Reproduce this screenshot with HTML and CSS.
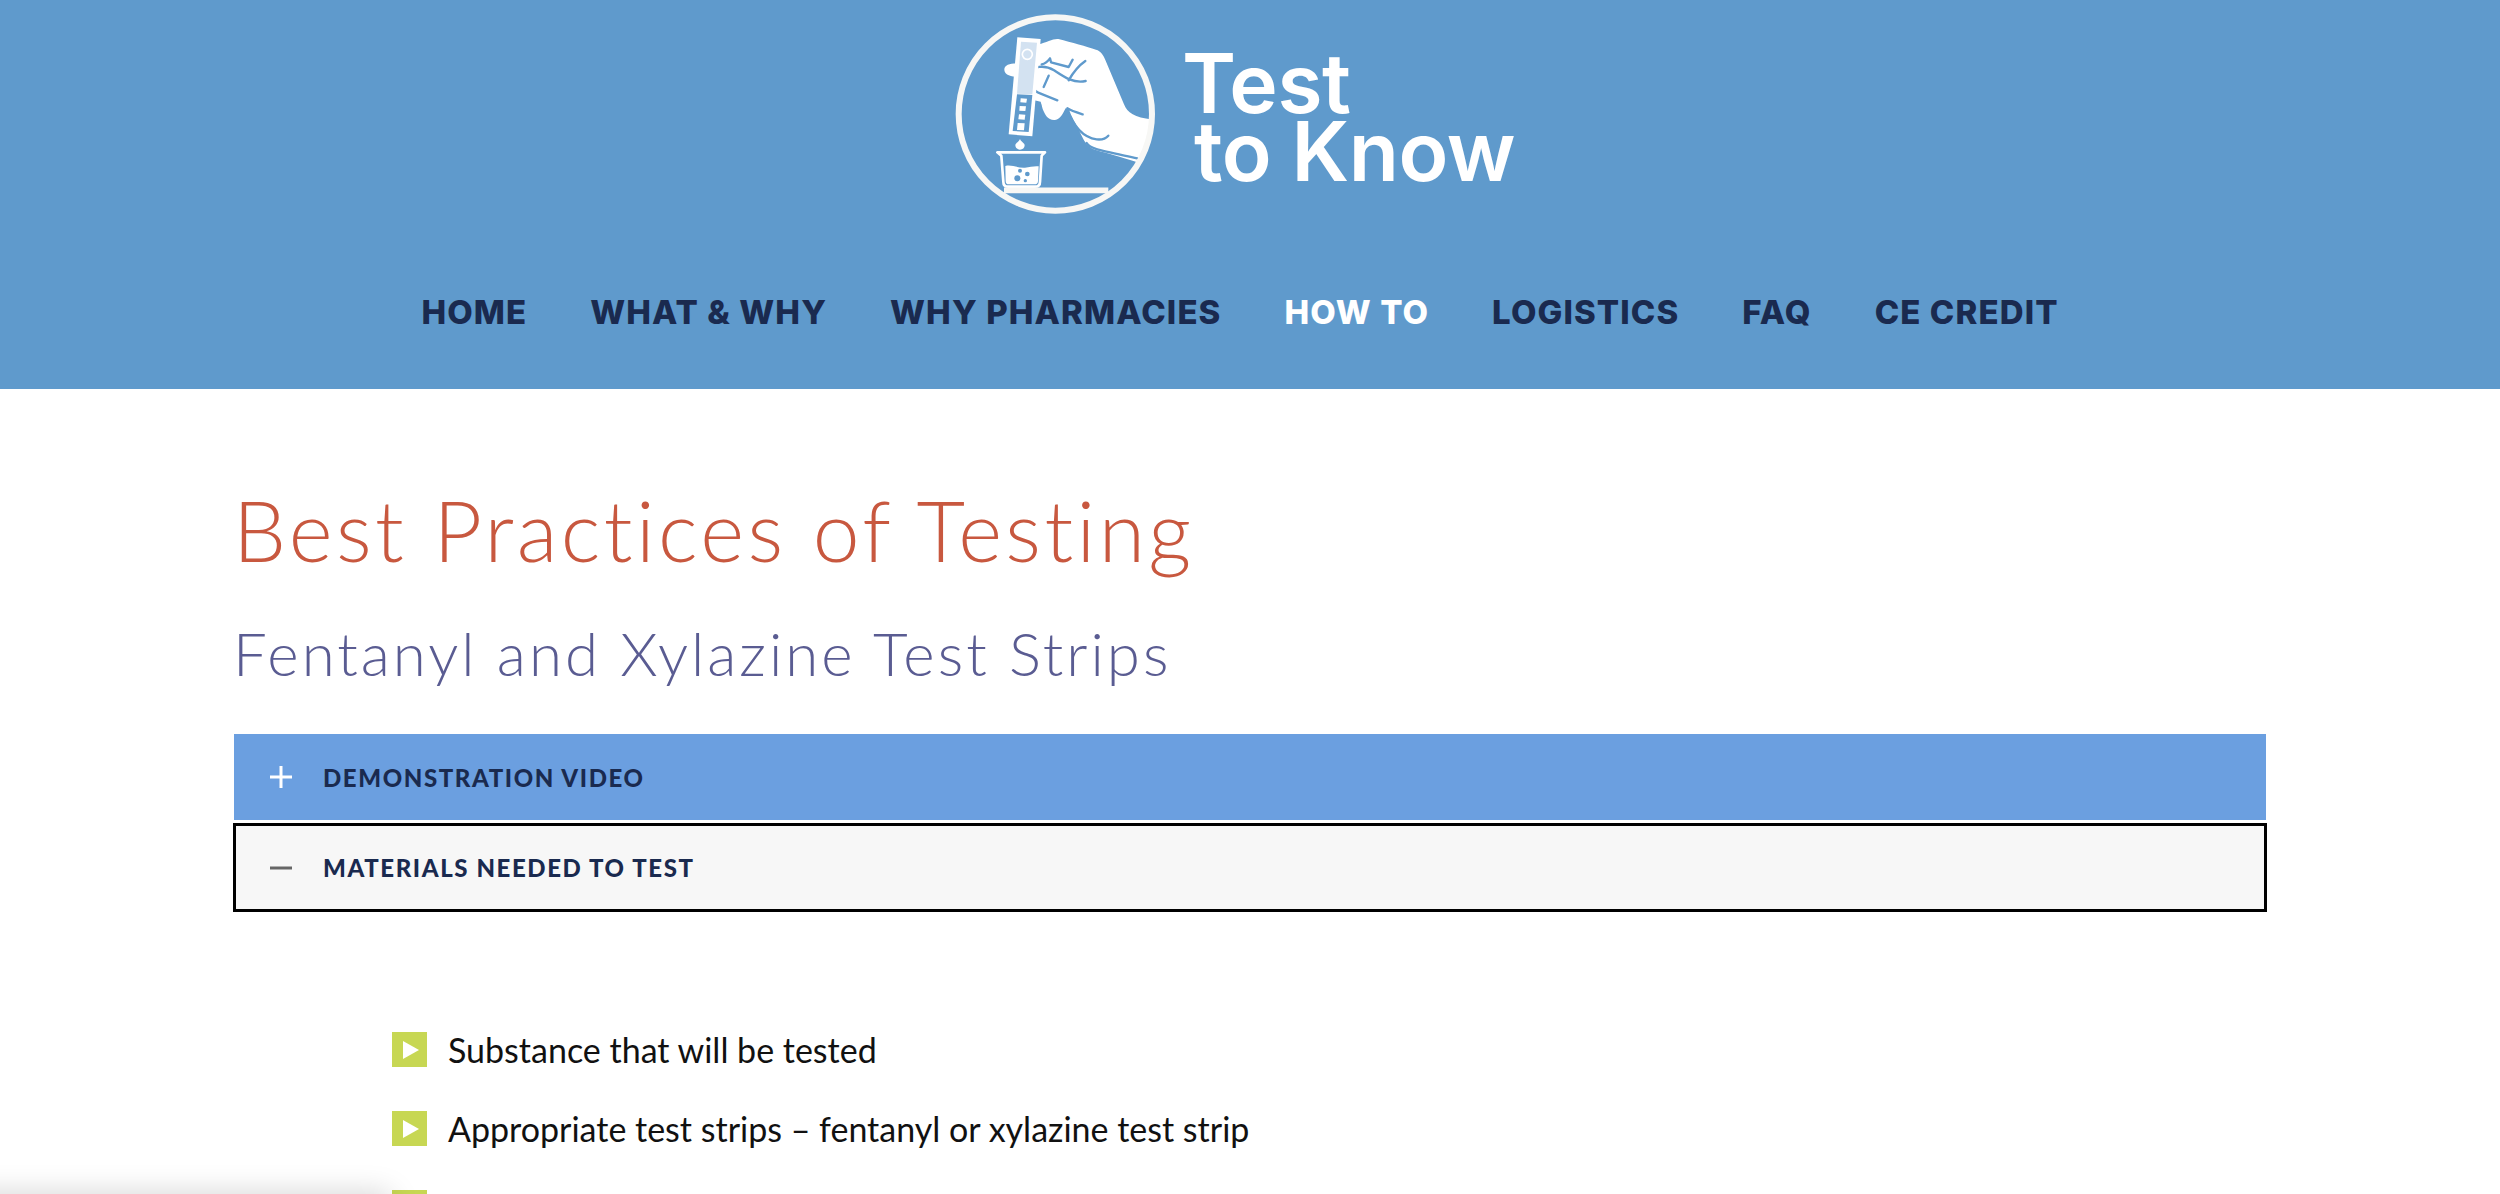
FILE: index.html
```html
<!DOCTYPE html>
<html lang="en">
<head>
	<meta charset="UTF-8">
	<title>Best Practices of Testing</title>
	<link rel="stylesheet" href="styles.css">
</head>
<body>
	<header class="site_header">
		<div class="brand">
			<svg class="brand_mark" viewBox="0 0 690 645" width="230" height="215">
				<defs>
					<clipPath id="ringClip"><circle cx="346" cy="327" r="290"/></clipPath>
				</defs>
				<!-- hand -->
				<g clip-path="url(#ringClip)">
					<path class="white" d="M295 118 C320 112 340 100 355 102 C395 112 440 125 468 134 C482 138 490 150 496 165 L552 298 C562 325 585 338 640 344 L640 420 L592 472 C540 455 500 445 470 436 C450 430 438 418 428 398 C410 360 395 335 378 308 C368 325 362 342 345 345 C325 347 315 330 308 312 L302 290 L280 285 Z"/>
					<path class="white" d="M240 176 C215 174 192 178 193 195 C194 212 215 214 235 216 Z"/>
					<path class="line" d="M437 228 C400 236 372 216 342 196 C312 178 278 184 267 205 C257 230 276 256 302 266 L352 286"/>
					<path class="line" d="M305 178 C318 176 324 168 330 160 L333 172 L386 186 L398 164"/>
					<path class="line" d="M386 226 C398 205 410 186 436 168"/>
					<path class="line" d="M326 212 L311 246"/>
					<path class="line" d="M428 328 C408 322 394 318 382 310 C396 352 420 396 470 403 C488 405 498 400 505 392"/>
					<path class="line" d="M440 414 C450 432 480 436 592 460"/>
					<path class="line thin" d="M302 300 L300 316"/>
				</g>
				<!-- strip -->
				<path class="white" d="M232 97 L302 102 L277 394 L206 388 Z"/>
				<path class="pale" d="M243 110 L291 113 L277 268 L231 266 Z"/>
				<path class="blue" d="M231 268 L277 270 L266 381 L218 378 Z"/>
				<circle class="ring_small" cx="262" cy="148" r="15"/>
				<path class="white" d="M242 280 L261 281 L259 293 L241 292 Z"/>
				<path class="white" d="M239 303 L258 304 L256 318 L238 317 Z"/>
				<path class="white" d="M237 328 L256 329 L254 344 L235 343 Z"/>
				<path class="white" d="M233 354 L254 355 L252 376 L231 375 Z"/>
				<!-- drop -->
				<path class="white" d="M240 402 C236 412 226 414 226 421 C226 429 233 434 240 434 C248 434 254 429 254 421 C254 414 244 412 240 402 Z"/>
				<!-- beaker -->
				<path class="beaker" d="M172 442 L315 442 L305 452 L300 530 C300 540 295 545 285 545 L205 545 C195 545 190 540 190 530 L184 452 Z"/>
				<path class="white" d="M196 483 C215 478 235 490 255 488 C270 486 285 482 296 484 L294 528 C294 535 290 538 284 538 L206 538 C200 538 197 535 197 528 Z"/>
				<circle class="blue" cx="240" cy="497" r="6"/>
				<circle class="blue" cx="262" cy="507" r="7"/>
				<circle class="blue" cx="232" cy="520" r="9"/>
				<circle class="blue" cx="256" cy="527" r="5"/>
				<!-- table and ring -->
				<path class="table" d="M192 556 L505 556"/>
				<circle class="ring" cx="346" cy="327" r="290"/>
			</svg>
			<div class="brand_name">
				<div class="brand_top">Test</div>
				<div class="brand_bottom">to Know</div>
			</div>
		</div>
		<nav class="main_nav">
			<a href="#">HOME</a>
			<a href="#">WHAT &amp; WHY</a>
			<a href="#">WHY PHARMACIES</a>
			<a href="#" class="current">HOW TO</a>
			<a href="#">LOGISTICS</a>
			<a href="#">FAQ</a>
			<a href="#">CE CREDIT</a>
		</nav>
	</header>

	<main class="content">
		<h1 class="page_title">Best Practices of Testing</h1>
		<h2 class="page_sub">Fentanyl and Xylazine Test Strips</h2>

		<div class="acc_bar">
			<svg class="acc_icon" viewBox="0 0 22 22" width="22" height="22"><path class="icon_plus" d="M0 11 H22 M11 0 V22"/></svg>
			<span>DEMONSTRATION VIDEO</span>
		</div>
		<div class="acc_bar open">
			<svg class="acc_icon" viewBox="0 0 22 22" width="22" height="22"><path class="icon_minus" d="M0 11 H22"/></svg>
			<span>MATERIALS NEEDED TO TEST</span>
		</div>

		<ul class="materials">
			<li><span class="bullet"></span>Substance that will be tested</li>
			<li><span class="bullet"></span>Appropriate test strips – fentanyl or xylazine test strip</li>
			<li><span class="bullet"></span></li>
		</ul>
	</main>

	<div class="corner_shadow"></div>
</body>
</html>
```

FILE: styles.css
```css
html, body {
	margin: 0;
	height: 1194px;
	overflow: hidden;
	background: #fff;
}
body {
	position: relative;
	font-family: "Lato", sans-serif;
}

/* header */
.site_header {
	height: 389px;
	background: #5f9acc;
}
.brand {
	display: flex;
	padding: 5px 0 0 940px;
	height: 215px;
}
.brand_mark {
	flex: none;
}
.white { fill: #fff; }
.blue { fill: #5f9acc; }
.pale { fill: #d3e2f1; }
.line {
	fill: none;
	stroke: #5f9acc;
	stroke-width: 7;
	stroke-linecap: round;
	stroke-linejoin: round;
}
.line.thin { stroke-width: 4; }
.ring_small {
	fill: #d3e2f1;
	stroke: #fff;
	stroke-width: 5;
}
.ring {
	fill: none;
	stroke: #f7f7f5;
	stroke-width: 18;
}
.beaker {
	fill: #5f9acc;
	stroke: #fff;
	stroke-width: 8;
	stroke-linejoin: round;
}
.table {
	fill: none;
	stroke: #f7f7f5;
	stroke-width: 17;
}
.brand_name {
	margin-left: 12px;
	padding-top: 45px;
	color: #fff;
	font-family: "Inter", sans-serif;
	font-weight: 600;
	font-size: 82px;
	line-height: 68px;
	letter-spacing: -0.4px;
}
.brand_bottom {
	margin-left: 12px;
}
.main_nav {
	display: flex;
	justify-content: center;
	gap: 63px;
	padding: 72px 20px 0 0;
	font-family: "Inter", sans-serif;
	font-weight: 800;
	font-size: 33px;
	line-height: 40px;
	letter-spacing: 1.1px;
}
.main_nav a {
	color: #1a2a4f;
	text-decoration: none;
}
.main_nav a.current {
	color: #fff;
}

/* content */
.content {
	padding: 0 233px;
}
.page_title {
	margin: 0;
	padding-top: 91px;
	color: #c8583f;
	font-weight: 300;
	font-size: 84px;
	line-height: 100px;
	letter-spacing: 3.4px;
}
.page_sub {
	margin: 0;
	padding-top: 37px;
	color: #5a5c92;
	font-weight: 300;
	font-size: 60px;
	line-height: 72px;
	letter-spacing: 3px;
}
.acc_bar {
	display: flex;
	align-items: center;
	gap: 31px;
	box-sizing: border-box;
	height: 86px;
	margin: 0 1px;
	padding-left: 36px;
	background: #6b9fe0;
	color: #1a2a4f;
	font-weight: 900;
	font-size: 24px;
	letter-spacing: 1.6px;
}
.acc_bar:first-of-type {
	margin-top: 45px;
}
.acc_bar.open {
	height: 89px;
	margin: 3px 0 0;
	padding-left: 34px;
	border: 3px solid #000;
	background: #f7f7f7;
}
.icon_plus {
	fill: none;
	stroke: #fff;
	stroke-width: 3;
}
.icon_minus {
	fill: none;
	stroke: #666;
	stroke-width: 3;
}
.materials {
	margin: 0;
	padding: 120px 0 0 159px;
	list-style: none;
	color: #111;
	font-size: 34px;
}
.materials li {
	display: flex;
	align-items: center;
	gap: 21px;
	height: 35px;
	margin-bottom: 44px;
}
.bullet {
	flex: none;
	position: relative;
	width: 35px;
	height: 35px;
	background: #c7d753;
}
.bullet::after {
	content: "";
	position: absolute;
	left: 11px;
	top: 9px;
	border-style: solid;
	border-width: 9px 0 9px 16px;
	border-color: transparent transparent transparent #fff;
}

/* faint shadow from a panel below the window */
.corner_shadow {
	position: absolute;
	left: -40px;
	bottom: -30px;
	width: 430px;
	height: 30px;
	box-shadow: 0 0 30px rgba(0, 0, 0, 0.18);
}
```
